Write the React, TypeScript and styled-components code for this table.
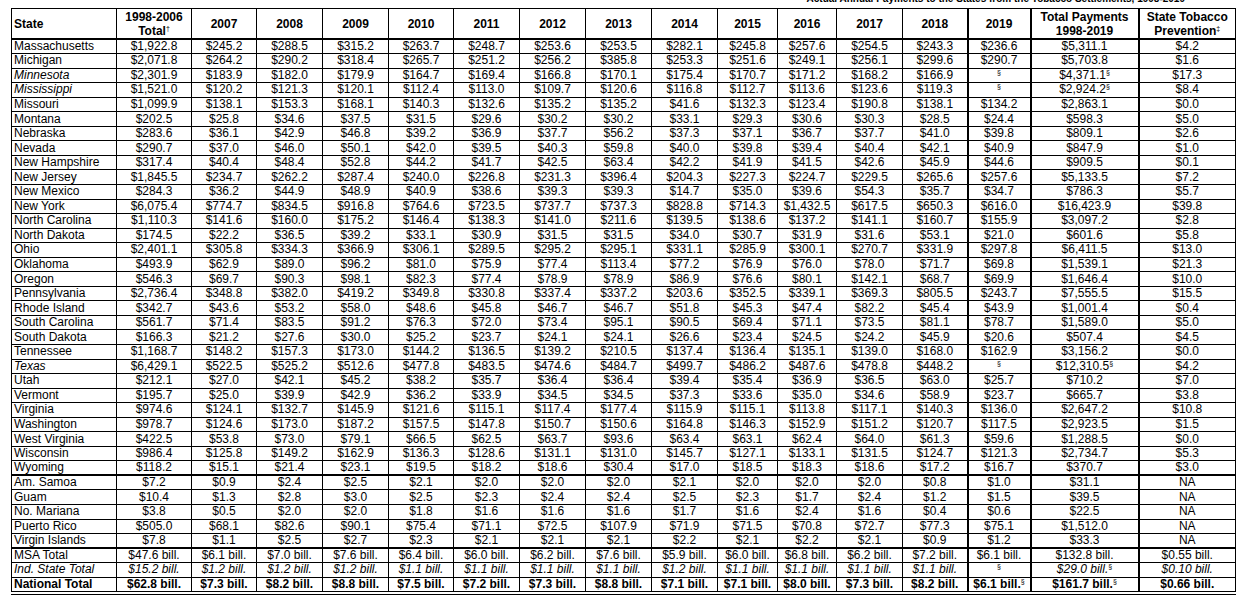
import React from 'react';
import styled, { createGlobalStyle } from 'styled-components';

const GlobalStyle = createGlobalStyle`
  html, body {
    margin: 0;
    padding: 0;
    background: #fff;
  }
  body {
    font-family: "Liberation Sans", Arial, sans-serif;
    color: #000;
  }
`;

const Page = styled.div`
  width: 1240px;
  height: 597px;
  overflow: hidden;
  padding-left: 11px;
  box-sizing: border-box;
`;

const Caption = styled.div`
  height: 12px;
  margin-top: -7px;
  margin-bottom: 3px;
  padding-right: 55px;
  font-size: 10px;
  line-height: 12px;
  font-weight: bold;
  text-align: right;
  white-space: nowrap;
`;

const Table = styled.table`
  width: 1224px;
  border-collapse: collapse;
  table-layout: fixed;
  font-size: 12px;
  line-height: 13px;
`;

const HeadCell = styled.th<{ $left?: boolean; $thickLeft?: boolean }>`
  height: 29px;
  padding: 0 2px;
  border: 1px solid #000;
  border-bottom: 2px solid #000;
  border-left-width: ${(p) => (p.$thickLeft ? '2px' : '1px')};
  font-weight: bold;
  line-height: 14px;
  text-align: ${(p) => (p.$left ? 'left' : 'center')};
  vertical-align: middle;
  white-space: nowrap;
`;

const Row = styled.tr<{ $thickTop?: boolean; $last?: boolean; $variant?: 'normal' | 'italic' | 'bold' }>`
  height: 14.56px;
  font-style: ${(p) => (p.$variant === 'italic' ? 'italic' : 'normal')};
  font-weight: ${(p) => (p.$variant === 'bold' ? 'bold' : 'normal')};

  & > td {
    border-top-width: ${(p) => (p.$thickTop ? '2px' : '1px')};
    border-bottom: ${(p) => (p.$last ? '4px double #000' : '1px solid #000')};
  }
`;

const NameCell = styled.td<{ $italic?: boolean }>`
  padding: 0 2px;
  border: 1px solid #000;
  text-align: left;
  font-style: ${(p) => (p.$italic ? 'italic' : 'inherit')};
  white-space: nowrap;
  overflow: hidden;
  vertical-align: middle;
`;

const ValueCell = styled.td<{ $thickLeft?: boolean }>`
  padding: 0;
  border: 1px solid #000;
  border-left-width: ${(p) => (p.$thickLeft ? '2px' : '1px')};
  text-align: center;
  white-space: nowrap;
  overflow: hidden;
  vertical-align: middle;
`;

const Sup = styled.sup`
  font-size: 7px;
  line-height: 0;
  vertical-align: 4px;
  font-weight: normal;
  font-style: normal;
`;

const widths = [105, 75, 65, 66, 66, 65, 66, 66, 66, 66, 60, 59, 66, 65, 63, 108, 97];
const thickCols = [14, 15, 16];

const years = ['2007', '2008', '2009', '2010', '2011', '2012', '2013', '2014', '2015', '2016', '2017', '2018', '2019'];

type DataRow = {
  name: string;
  italicName?: boolean;
  values: string[];
  variant?: 'normal' | 'italic' | 'bold';
  thickTop?: boolean;
  last?: boolean;
};

const states: [string, string, boolean?][] = [
  ['Massachusetts', '$1,922.8 $245.2 $288.5 $315.2 $263.7 $248.7 $253.6 $253.5 $282.1 $245.8 $257.6 $254.5 $243.3 $236.6 $5,311.1 $4.2'],
  ['Michigan', '$2,071.8 $264.2 $290.2 $318.4 $265.7 $251.2 $256.2 $385.8 $253.3 $251.6 $249.1 $256.1 $299.6 $290.7 $5,703.8 $1.6'],
  ['Minnesota', '$2,301.9 $183.9 $182.0 $179.9 $164.7 $169.4 $166.8 $170.1 $175.4 $170.7 $171.2 $168.2 $166.9 § $4,371.1§ $17.3', true],
  ['Mississippi', '$1,521.0 $120.2 $121.3 $120.1 $112.4 $113.0 $109.7 $120.6 $116.8 $112.7 $113.6 $123.6 $119.3 § $2,924.2§ $8.4', true],
  ['Missouri', '$1,099.9 $138.1 $153.3 $168.1 $140.3 $132.6 $135.2 $135.2 $41.6 $132.3 $123.4 $190.8 $138.1 $134.2 $2,863.1 $0.0'],
  ['Montana', '$202.5 $25.8 $34.6 $37.5 $31.5 $29.6 $30.2 $30.2 $33.1 $29.3 $30.6 $30.3 $28.5 $24.4 $598.3 $5.0'],
  ['Nebraska', '$283.6 $36.1 $42.9 $46.8 $39.2 $36.9 $37.7 $56.2 $37.3 $37.1 $36.7 $37.7 $41.0 $39.8 $809.1 $2.6'],
  ['Nevada', '$290.7 $37.0 $46.0 $50.1 $42.0 $39.5 $40.3 $59.8 $40.0 $39.8 $39.4 $40.4 $42.1 $40.9 $847.9 $1.0'],
  ['New Hampshire', '$317.4 $40.4 $48.4 $52.8 $44.2 $41.7 $42.5 $63.4 $42.2 $41.9 $41.5 $42.6 $45.9 $44.6 $909.5 $0.1'],
  ['New Jersey', '$1,845.5 $234.7 $262.2 $287.4 $240.0 $226.8 $231.3 $396.4 $204.3 $227.3 $224.7 $229.5 $265.6 $257.6 $5,133.5 $7.2'],
  ['New Mexico', '$284.3 $36.2 $44.9 $48.9 $40.9 $38.6 $39.3 $39.3 $14.7 $35.0 $39.6 $54.3 $35.7 $34.7 $786.3 $5.7'],
  ['New York', '$6,075.4 $774.7 $834.5 $916.8 $764.6 $723.5 $737.7 $737.3 $828.8 $714.3 $1,432.5 $617.5 $650.3 $616.0 $16,423.9 $39.8'],
  ['North Carolina', '$1,110.3 $141.6 $160.0 $175.2 $146.4 $138.3 $141.0 $211.6 $139.5 $138.6 $137.2 $141.1 $160.7 $155.9 $3,097.2 $2.8'],
  ['North Dakota', '$174.5 $22.2 $36.5 $39.2 $33.1 $30.9 $31.5 $31.5 $34.0 $30.7 $31.9 $31.6 $53.1 $21.0 $601.6 $5.8'],
  ['Ohio', '$2,401.1 $305.8 $334.3 $366.9 $306.1 $289.5 $295.2 $295.1 $331.1 $285.9 $300.1 $270.7 $331.9 $297.8 $6,411.5 $13.0'],
  ['Oklahoma', '$493.9 $62.9 $89.0 $96.2 $81.0 $75.9 $77.4 $113.4 $77.2 $76.9 $76.0 $78.0 $71.7 $69.8 $1,539.1 $21.3'],
  ['Oregon', '$546.3 $69.7 $90.3 $98.1 $82.3 $77.4 $78.9 $78.9 $86.9 $76.6 $80.1 $142.1 $68.7 $69.9 $1,646.4 $10.0'],
  ['Pennsylvania', '$2,736.4 $348.8 $382.0 $419.2 $349.8 $330.8 $337.4 $337.2 $203.6 $352.5 $339.1 $369.3 $805.5 $243.7 $7,555.5 $15.5'],
  ['Rhode Island', '$342.7 $43.6 $53.2 $58.0 $48.6 $45.8 $46.7 $46.7 $51.8 $45.3 $47.4 $82.2 $45.4 $43.9 $1,001.4 $0.4'],
  ['South Carolina', '$561.7 $71.4 $83.5 $91.2 $76.3 $72.0 $73.4 $95.1 $90.5 $69.4 $71.1 $73.5 $81.1 $78.7 $1,589.0 $5.0'],
  ['South Dakota', '$166.3 $21.2 $27.6 $30.0 $25.2 $23.7 $24.1 $24.1 $26.6 $23.4 $24.5 $24.2 $45.9 $20.6 $507.4 $4.5'],
  ['Tennessee', '$1,168.7 $148.2 $157.3 $173.0 $144.2 $136.5 $139.2 $210.5 $137.4 $136.4 $135.1 $139.0 $168.0 $162.9 $3,156.2 $0.0'],
  ['Texas', '$6,429.1 $522.5 $525.2 $512.6 $477.8 $483.5 $474.6 $484.7 $499.7 $486.2 $487.6 $478.8 $448.2 § $12,310.5§ $4.2', true],
  ['Utah', '$212.1 $27.0 $42.1 $45.2 $38.2 $35.7 $36.4 $36.4 $39.4 $35.4 $36.9 $36.5 $63.0 $25.7 $710.2 $7.0'],
  ['Vermont', '$195.7 $25.0 $39.9 $42.9 $36.2 $33.9 $34.5 $34.5 $37.3 $33.6 $35.0 $34.6 $58.9 $23.7 $665.7 $3.8'],
  ['Virginia', '$974.6 $124.1 $132.7 $145.9 $121.6 $115.1 $117.4 $177.4 $115.9 $115.1 $113.8 $117.1 $140.3 $136.0 $2,647.2 $10.8'],
  ['Washington', '$978.7 $124.6 $173.0 $187.2 $157.5 $147.8 $150.7 $150.6 $164.8 $146.3 $152.9 $151.2 $120.7 $117.5 $2,923.5 $1.5'],
  ['West Virginia', '$422.5 $53.8 $73.0 $79.1 $66.5 $62.5 $63.7 $93.6 $63.4 $63.1 $62.4 $64.0 $61.3 $59.6 $1,288.5 $0.0'],
  ['Wisconsin', '$986.4 $125.8 $149.2 $162.9 $136.3 $128.6 $131.1 $131.0 $145.7 $127.1 $133.1 $131.5 $124.7 $121.3 $2,734.7 $5.3'],
  ['Wyoming', '$118.2 $15.1 $21.4 $23.1 $19.5 $18.2 $18.6 $30.4 $17.0 $18.5 $18.3 $18.6 $17.2 $16.7 $370.7 $3.0'],
];

const territories: [string, string][] = [
  ['Am. Samoa', '$7.2 $0.9 $2.4 $2.5 $2.1 $2.0 $2.0 $2.0 $2.1 $2.0 $2.0 $2.0 $0.8 $1.0 $31.1 NA'],
  ['Guam', '$10.4 $1.3 $2.8 $3.0 $2.5 $2.3 $2.4 $2.4 $2.5 $2.3 $1.7 $2.4 $1.2 $1.5 $39.5 NA'],
  ['No. Mariana', '$3.8 $0.5 $2.0 $2.0 $1.8 $1.6 $1.6 $1.6 $1.7 $1.6 $2.4 $1.6 $0.4 $0.6 $22.5 NA'],
  ['Puerto Rico', '$505.0 $68.1 $82.6 $90.1 $75.4 $71.1 $72.5 $107.9 $71.9 $71.5 $70.8 $72.7 $77.3 $75.1 $1,512.0 NA'],
  ['Virgin Islands', '$7.8 $1.1 $2.5 $2.7 $2.3 $2.1 $2.1 $2.1 $2.2 $2.1 $2.2 $2.1 $0.9 $1.2 $33.3 NA'],
];

// "$6.1" -> "$6.1 bill.", "$6.1§" -> "$6.1 bill.§", "§" stays as is
const bill = (s: string) =>
  s.split(' ').map((v) => (v === '§' ? v : v.replace(/§$/, ' bill.§').replace(/^(\$[\d.,]+)$/, '$1 bill.')));

const rows: DataRow[] = [
  ...states.map(([name, v, it]) => ({ name, italicName: it, values: v.split(' ') })),
  ...territories.map(([name, v], i) => ({ name, values: v.split(' '), thickTop: i === 0 })),
  {
    name: 'MSA Total',
    thickTop: true,
    values: bill('$47.6 $6.1 $7.0 $7.6 $6.4 $6.0 $6.2 $7.6 $5.9 $6.0 $6.8 $6.2 $7.2 $6.1 $132.8 $0.55'),
  },
  {
    name: 'Ind. State Total',
    variant: 'italic',
    values: bill('$15.2 $1.2 $1.2 $1.2 $1.1 $1.1 $1.1 $1.1 $1.2 $1.1 $1.1 $1.1 $1.1 § $29.0§ $0.10'),
  },
  {
    name: 'National Total',
    variant: 'bold',
    last: true,
    values: bill('$62.8 $7.3 $8.2 $8.8 $7.5 $7.2 $7.3 $8.8 $7.1 $7.1 $8.0 $7.3 $8.2 $6.1§ $161.7§ $0.66'),
  },
];

const renderValue = (v: string) => {
  if (v === '§') return <Sup>§</Sup>;
  if (v.endsWith('§')) {
    return (
      <>
        {v.slice(0, -1)}
        <Sup>§</Sup>
      </>
    );
  }
  return v;
};

const App: React.FC = () => {
  return (
    <Page>
      <GlobalStyle />
      <Caption>Actual Annual Payments to the States from the Tobacco Settlements, 1998-2019</Caption>
      <Table>
        <colgroup>
          {widths.map((w, i) => (
            <col key={i} style={{ width: w }} />
          ))}
        </colgroup>
        <thead>
          <tr>
            <HeadCell $left>State</HeadCell>
            <HeadCell>
              1998-2006
              <br />
              Total<Sup>†</Sup>
            </HeadCell>
            {years.map((y) => (
              <HeadCell key={y} $thickLeft={y === '2019'}>
                {y}
              </HeadCell>
            ))}
            <HeadCell $thickLeft>
              Total Payments
              <br />
              1998-2019
            </HeadCell>
            <HeadCell $thickLeft>
              State Tobacco
              <br />
              Prevention<Sup>‡</Sup>
            </HeadCell>
          </tr>
        </thead>
        <tbody>
          {rows.map((r) => (
            <Row key={r.name} $thickTop={r.thickTop} $last={r.last} $variant={r.variant}>
              <NameCell $italic={r.italicName}>{r.name}</NameCell>
              {r.values.map((v, i) => (
                <ValueCell key={i} $thickLeft={thickCols.includes(i + 1)}>
                  {renderValue(v)}
                </ValueCell>
              ))}
            </Row>
          ))}
        </tbody>
      </Table>
    </Page>
  );
};

export default App;
